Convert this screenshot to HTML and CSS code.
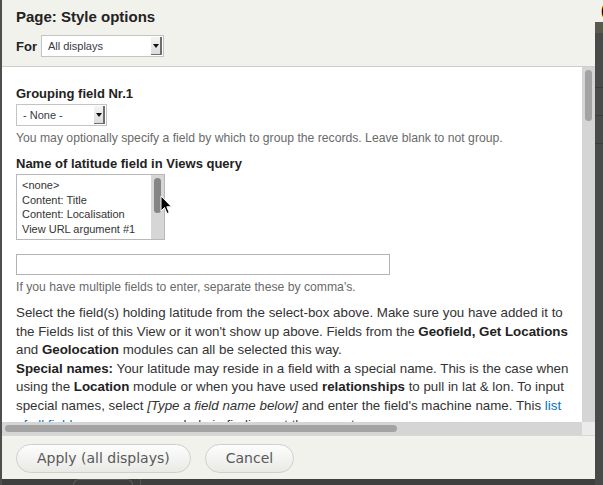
FILE: index.html
```html
<!DOCTYPE html>
<html lang="en">
<head>
    <meta charset="UTF-8">
    <title>Page: Style options</title>
    <link rel="stylesheet" href="styles.css">
</head>
<body>
    <div class="page">
        <div class="edge-left"></div>
        <div class="middle">
            <div class="dialog">
                <div class="dialog-header">
                    <h1 class="dialog-title">Page: Style options</h1>
                    <div class="for-row">
                        <span class="for-label">For</span>
                        <span class="select select-for">
                            <span class="select-text">All displays</span>
                            <span class="select-arrow"></span>
                        </span>
                    </div>
                </div>
                <div class="dialog-body">
                    <div class="scroll-view">
                        <div class="form-item">
                            <label class="item-label">Grouping field Nr.1</label>
                            <span class="select select-none">
                                <span class="select-text">- None -</span>
                                <span class="select-arrow"></span>
                            </span>
                            <div class="description">You may optionally specify a field by which to group the records. Leave blank to not group.</div>
                        </div>
                        <div class="form-item">
                            <label class="item-label">Name of latitude field in Views query</label>
                            <div class="listbox">
                                <ul class="options">
                                    <li>&lt;none&gt;</li>
                                    <li>Content: Title</li>
                                    <li>Content: Localisation</li>
                                    <li>View URL argument #1</li>
                                </ul>
                                <div class="list-track"><div class="list-thumb"></div></div>
                            </div>
                            <div class="text-input"></div>
                            <div class="description">If you have multiple fields to enter, separate these by comma's.</div>
                            <p class="help">
                                Select the field(s) holding latitude from the select-box above. Make sure you have added it to the Fields list of this View or it won't show up above. Fields from the <b>Geofield, Get Locations</b> and <b>Geolocation</b> modules can all be selected this way.<br>
                                <b>Special names:</b> Your latitude may reside in a field with a special name. This is the case when using the <b>Location</b> module or when you have used <b>relationships</b> to pull in lat &amp; lon. To input special names, select <em>[Type a field name below]</em> and enter the field's machine name. This <a href="#">list of all fields</a> you can use can help in finding out the correct one.
                            </p>
                        </div>
                    </div>
                    <div class="vscroll"><div class="vthumb"></div></div>
                    <div class="hscroll"><div class="hthumb"></div></div>
                    <div class="scroll-corner"></div>
                </div>
                <div class="dialog-footer">
                    <span class="button">Apply (all displays)</span>
                    <span class="button">Cancel</span>
                </div>
            </div>
            <div class="edge-bottom">
                <span class="behind-button"></span>
                <span class="behind-line"></span>
            </div>
        </div>
        <div class="edge-right">
            <div class="edge-right-top">(</div>
            <div class="edge-right-band"></div>
            <div class="edge-right-rest">
                <span class="behind-row"></span>
                <span class="behind-row"></span>
                <span class="behind-row"></span>
            </div>
        </div>
    </div>

    <svg class="cursor" width="13" height="20" viewBox="0 0 13 20">
        <path d="M1 1 L1 16 L4.5 12.5 L7 18.5 L9.2 17.6 L6.8 11.8 L11.5 11.8 Z" fill="#000" stroke="#fff" stroke-width="1" stroke-linejoin="round"/>
    </svg>
</body>
</html>
```

FILE: styles.css
```css
body {
    margin: 0;
    background: #474747;
    font-family: "Liberation Sans", Arial, sans-serif;
    color: #333;
}
.page {
    display: flex;
    height: 485px;
    width: 603px;
    overflow: hidden;
    position: relative;
}
.edge-left {
    width: 2px;
    background: #4e4e4a;
}
.middle {
    width: 593px;
    display: flex;
    flex-direction: column;
}
.dialog {
    height: 479px;
    display: flex;
    flex-direction: column;
    background: #fff;
}

/* header */
.dialog-header {
    box-sizing: border-box;
    height: 67px;
    padding: 8px 0 0 14px;
    background: #f2f2ed;
    border-bottom: 1px solid #cdcdcd;
}
.dialog-title {
    margin: 0;
    font-size: 15px;
    line-height: 18px;
    font-weight: bold;
    color: #222;
}
.for-row {
    display: flex;
    align-items: center;
    margin-top: 9px;
}
.for-label {
    font-size: 13px;
    font-weight: bold;
    color: #222;
    margin-right: 4px;
}

/* fake selects */
.select {
    display: inline-flex;
    align-items: stretch;
    box-sizing: border-box;
    height: 22px;
    background: #fff;
    border: 1px solid #c4c4c4;
    padding: 1px 1px 1px 0;
}
.select-for {
    width: 123px;
}
.select-none {
    width: 91px;
    margin-top: 2px;
}
.select-text {
    flex: 1;
    font-size: 11px;
    line-height: 18px;
    padding-left: 6px;
    color: #3a3a46;
}
.select-arrow {
    width: 9px;
    position: relative;
    background: linear-gradient(#f4f4f4, #dcdcdc);
    border-right: 2px solid #6e6e6e;
    border-bottom: 1px solid #6e6e6e;
}
.select-arrow::after {
    content: "";
    position: absolute;
    left: 2px;
    top: 7px;
    border-left: 3px solid transparent;
    border-right: 3px solid transparent;
    border-top: 4px solid #111;
}

/* scrolling body */
.dialog-body {
    display: grid;
    grid-template-columns: 580px 13px;
    grid-template-rows: 355px 13px;
    height: 368px;
}
.scroll-view {
    overflow: hidden;
    padding: 19px 11px 0 14px;
}
.vscroll {
    background: #d5d5d5;
}
.vthumb {
    width: 7px;
    height: 51px;
    margin: 3px 0 0 3px;
    border-radius: 4px;
    background: #a3a3a3;
}
.hscroll {
    background: #d5d5d5;
}
.hthumb {
    width: 392px;
    height: 7px;
    margin: 3px 0 0 3px;
    border-radius: 4px;
    background: #a3a3a3;
}
.scroll-corner {
    background: #ebebeb;
}

/* form items */
.form-item {
    margin-bottom: 10px;
}
.item-label {
    display: block;
    font-size: 13px;
    line-height: 16px;
    font-weight: bold;
    color: #222;
}
.description {
    font-size: 12.2px;
    line-height: 15px;
    color: #6a6a6a;
    margin-top: 5px;
}
.listbox {
    display: flex;
    width: 149px;
    height: 66px;
    box-sizing: border-box;
    margin-top: 2px;
    border: 1px solid #b8b8b8;
    background: #fff;
}
.options {
    flex: 1;
    list-style: none;
    margin: 0;
    padding: 3px 0 0 5px;
    font-size: 11px;
    line-height: 14.7px;
    color: #333;
    overflow: hidden;
}
.list-track {
    width: 13px;
    background: #d6d6d6;
}
.list-thumb {
    width: 7px;
    height: 35px;
    margin: 3px 0 0 3px;
    border-radius: 4px;
    background: #858585;
}
.text-input {
    width: 374px;
    height: 21px;
    box-sizing: border-box;
    margin-top: 14px;
    border: 1px solid #b4b4b4;
    background: #fff;
}
.help {
    margin: 9px 0 0;
    font-size: 13.33px;
    line-height: 18.6px;
    color: #333;
}
.help b {
    color: #222;
}
.help a {
    color: #0074bd;
    text-decoration: none;
}

/* footer */
.dialog-footer {
    flex: 1;
    display: flex;
    align-items: flex-start;
    gap: 14px;
    padding: 8px 0 0 14px;
    background: #f2f2ed;
    border-top: 1px solid #d9d9d4;
}
.button {
    box-sizing: border-box;
    height: 29px;
    padding: 0 20px;
    border: 1px solid #cfcfcb;
    border-radius: 15px;
    background: linear-gradient(#fdfdfd, #e9e9e6);
    font-family: "DejaVu Sans", sans-serif;
    font-size: 14px;
    line-height: 27px;
    color: #595959;
}

/* page behind the overlay */
.edge-bottom {
    flex: 1;
    display: flex;
    background: #3f3f3f;
    padding-left: 71px;
}
.behind-button {
    width: 58px;
    border: 1px solid #5e5e5e;
    border-bottom: none;
    border-radius: 6px 6px 0 0;
}
.behind-line {
    width: 1px;
    margin-left: 7px;
    background: #555;
}
.edge-right {
    width: 8px;
    display: flex;
    flex-direction: column;
}
.edge-right-top {
    height: 22px;
    background: #f2f2ed;
    font-size: 16px;
    font-weight: bold;
    line-height: 22px;
    padding-left: 6px;
    color: #000;
    overflow: hidden;
}
.edge-right-band {
    height: 11px;
    background: #5a5a4c;
}
.edge-right-rest {
    flex: 1;
    background: #4a4a4a;
    padding-top: 27px;
}
.behind-row {
    display: block;
    height: 27px;
    border-bottom: 1px solid #3c3c3c;
}

.cursor {
    position: absolute;
    left: 160px;
    top: 195px;
}
```
